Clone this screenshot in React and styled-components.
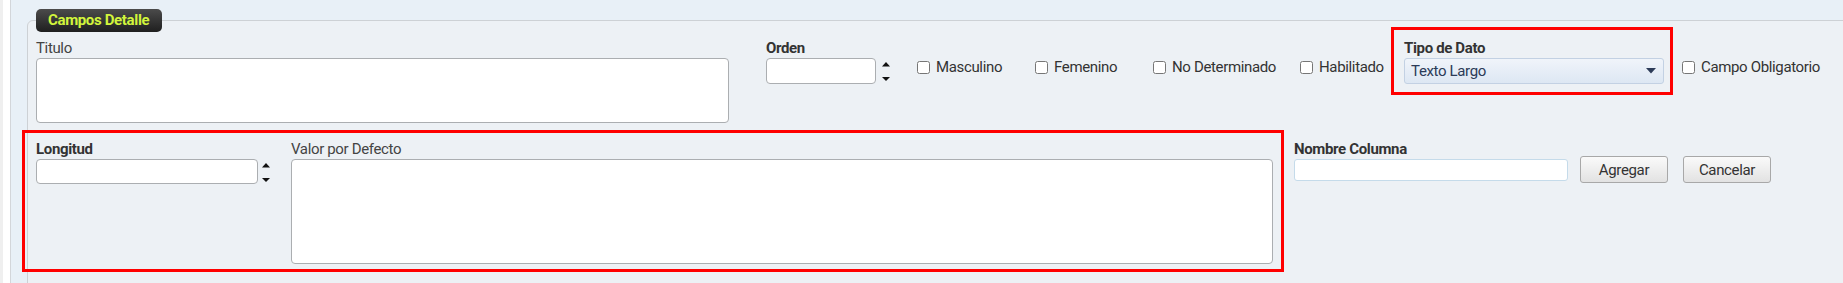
import React from "react";
import styled, { createGlobalStyle } from "styled-components";

const Global = createGlobalStyle`
  html, body { margin: 0; padding: 0; }
  body {
    font-family: Roboto, "Liberation Sans", Arial, sans-serif;
    background: #e8f0f7;
    color: #333;
  }
  * { box-sizing: border-box; }
`;

const Page = styled.div`
  display: flex;
  height: 283px;
  overflow: hidden;
`;

const SideRail = styled.div`
  flex: 0 0 11px;
  border-right: 1px solid #d3d6da;
  background: linear-gradient(to right, #efefef 0 3px, #ffffff 3px);
`;

const Main = styled.main`
  flex: 1;
  min-width: 0;
  padding: 9px 0 0 16px;
  background: #e8f0f7;
  overflow: hidden;
`;

const Panel = styled.fieldset`
  margin: 0 -40px 0 0;
  padding: 7px 0 0 8px;
  min-width: 0;
  min-height: 330px;
  border: 1px solid #cdd1d5;
  border-radius: 6px 0 0 0;
  background: #edf1f5;
`;

const Legend = styled.legend`
  margin: 0;
  padding: 0 13px 0 12px;
  height: 23px;
  line-height: 23px;
  border-radius: 5px;
  background: linear-gradient(#4b4b4b, #1f1f1f);
  color: #d2f53c;
  font-size: 15px;
  font-weight: 700;
  letter-spacing: -0.35px;
`;

const Row = styled.div`
  display: flex;
  align-items: flex-start;
  margin-top: ${(p) => p.$top || 0}px;
`;

const Field = styled.div`
  display: flex;
  flex-direction: column;
  flex: 0 0 auto;
  width: ${(p) => (p.$w ? `${p.$w}px` : "auto")};
  margin-left: ${(p) => p.$ml || 0}px;
  margin-top: ${(p) => p.$mt || 0}px;
`;

const Label = styled.label`
  display: block;
  height: 19px;
  font-size: 15px;
  line-height: 19px;
  letter-spacing: -0.35px;
  white-space: nowrap;
  font-weight: ${(p) => (p.$bold ? 700 : 400)};
  color: ${(p) => (p.$bold ? "#333" : "#444")};
`;

const TextArea = styled.textarea`
  display: block;
  width: ${(p) => p.$w}px;
  height: ${(p) => p.$h}px;
  margin: 0;
  padding: 4px 6px;
  border: 1px solid #abaeb1;
  border-radius: 4px;
  background: #fff;
  resize: none;
  font: inherit;
`;

const InputRow = styled.div`
  display: flex;
  align-items: center;
`;

const TextInput = styled.input`
  display: block;
  width: ${(p) => p.$w}px;
  height: ${(p) => p.$h}px;
  margin: 0;
  padding: 0 6px;
  border: 1px solid ${(p) => (p.$light ? "#c5dbea" : "#abaeb1")};
  border-radius: ${(p) => (p.$light ? 3 : 4)}px;
  background: #fff;
  font: inherit;
  font-size: 14px;
`;

const SpinnerBox = styled.span`
  display: block;
  width: 8px;
  height: 20px;
  margin-left: ${(p) => p.$ml}px;
`;

const Spinner = ({ ml }) => (
  <SpinnerBox $ml={ml}>
    <svg width="8" height="20" viewBox="0 0 8 20">
      <polygon points="0,5.5 4,1 8,5.5" fill="#111" />
      <polygon points="0,16 8,16 4,20" fill="#111" />
    </svg>
  </SpinnerBox>
);

const CheckItem = styled.label`
  display: flex;
  align-items: center;
  flex: 0 0 auto;
  gap: 6px;
  height: 20px;
  width: ${(p) => p.$w}px;
  margin-left: ${(p) => p.$ml || 0}px;
  margin-top: 18px;
  font-size: 15px;
  letter-spacing: -0.35px;
  color: #333;
  white-space: nowrap;
`;

const Check = styled.input.attrs({ type: "checkbox" })`
  width: 13px;
  height: 13px;
  margin: 0;
  flex: 0 0 13px;
`;

const Highlight = styled.div`
  flex: 0 0 auto;
  border: 3px solid #ff0000;
`;

const TipoBox = styled(Highlight)`
  margin-top: -12px;
  padding: 9px 6px 8px 10px;
`;

const GroupBox = styled(Highlight)`
  display: flex;
  align-items: flex-start;
  margin-left: -14px;
  padding: 7px 8px 5px 11px;
`;

const SelectBox = styled.div`
  display: flex;
  align-items: center;
  justify-content: space-between;
  width: 260px;
  height: 26px;
  padding: 0 7px 0 6px;
  border: 1px solid #c3d1e3;
  border-radius: 3px;
  background: linear-gradient(#f0f4fa, #dde7f3);
  color: #2c3b58;
  font-size: 15px;
  letter-spacing: -0.35px;
`;

const Button = styled.button`
  flex: 0 0 auto;
  width: 88px;
  height: 27px;
  margin-left: ${(p) => p.$ml}px;
  margin-top: 26px;
  padding: 0;
  border: 1px solid #a8a8a8;
  border-radius: 3px;
  background: linear-gradient(#fafafa, #e2e2e2);
  color: #333;
  font: inherit;
  font-size: 15px;
  letter-spacing: -0.35px;
`;

export default function App() {
  return (
    <>
      <Global />
      <Page>
        <SideRail />
        <Main>
          <Panel>
            <Legend>Campos Detalle</Legend>
            <Row>
              <Field $w={693}>
                <Label>Titulo</Label>
                <TextArea $w={693} $h={65} />
              </Field>
              <Field $ml={37}>
                <Label $bold>Orden</Label>
                <InputRow>
                  <TextInput $w={110} $h={26} />
                  <Spinner ml={6} />
                </InputRow>
              </Field>
              <CheckItem $w={118} $ml={27}>
                <Check />
                Masculino
              </CheckItem>
              <CheckItem $w={118}>
                <Check />
                Femenino
              </CheckItem>
              <CheckItem $w={147}>
                <Check />
                No Determinado
              </CheckItem>
              <CheckItem $w={91}>
                <Check />
                Habilitado
              </CheckItem>
              <TipoBox>
                <Label $bold>Tipo de Dato</Label>
                <SelectBox role="combobox">
                  <span>Texto Largo</span>
                  <svg width="10" height="6" viewBox="0 0 10 6">
                    <polygon points="0,0 10,0 5,5.5" fill="#2c3b58" />
                  </svg>
                </SelectBox>
              </TipoBox>
              <CheckItem $w={140} $ml={9}>
                <Check />
                Campo Obligatorio
              </CheckItem>
            </Row>
            <Row $top={7}>
              <GroupBox>
                <Field $w={234}>
                  <Label $bold>Longitud</Label>
                  <InputRow>
                    <TextInput $w={222} $h={25} />
                    <Spinner ml={4} />
                  </InputRow>
                </Field>
                <Field $ml={21}>
                  <Label>Valor por Defecto</Label>
                  <TextArea $w={982} $h={105} />
                </Field>
              </GroupBox>
              <Field $ml={10} $mt={10}>
                <Label $bold>Nombre Columna</Label>
                <TextInput $w={274} $h={22} $light />
              </Field>
              <Button $ml={12}>Agregar</Button>
              <Button $ml={15}>Cancelar</Button>
            </Row>
          </Panel>
        </Main>
      </Page>
    </>
  );
}
